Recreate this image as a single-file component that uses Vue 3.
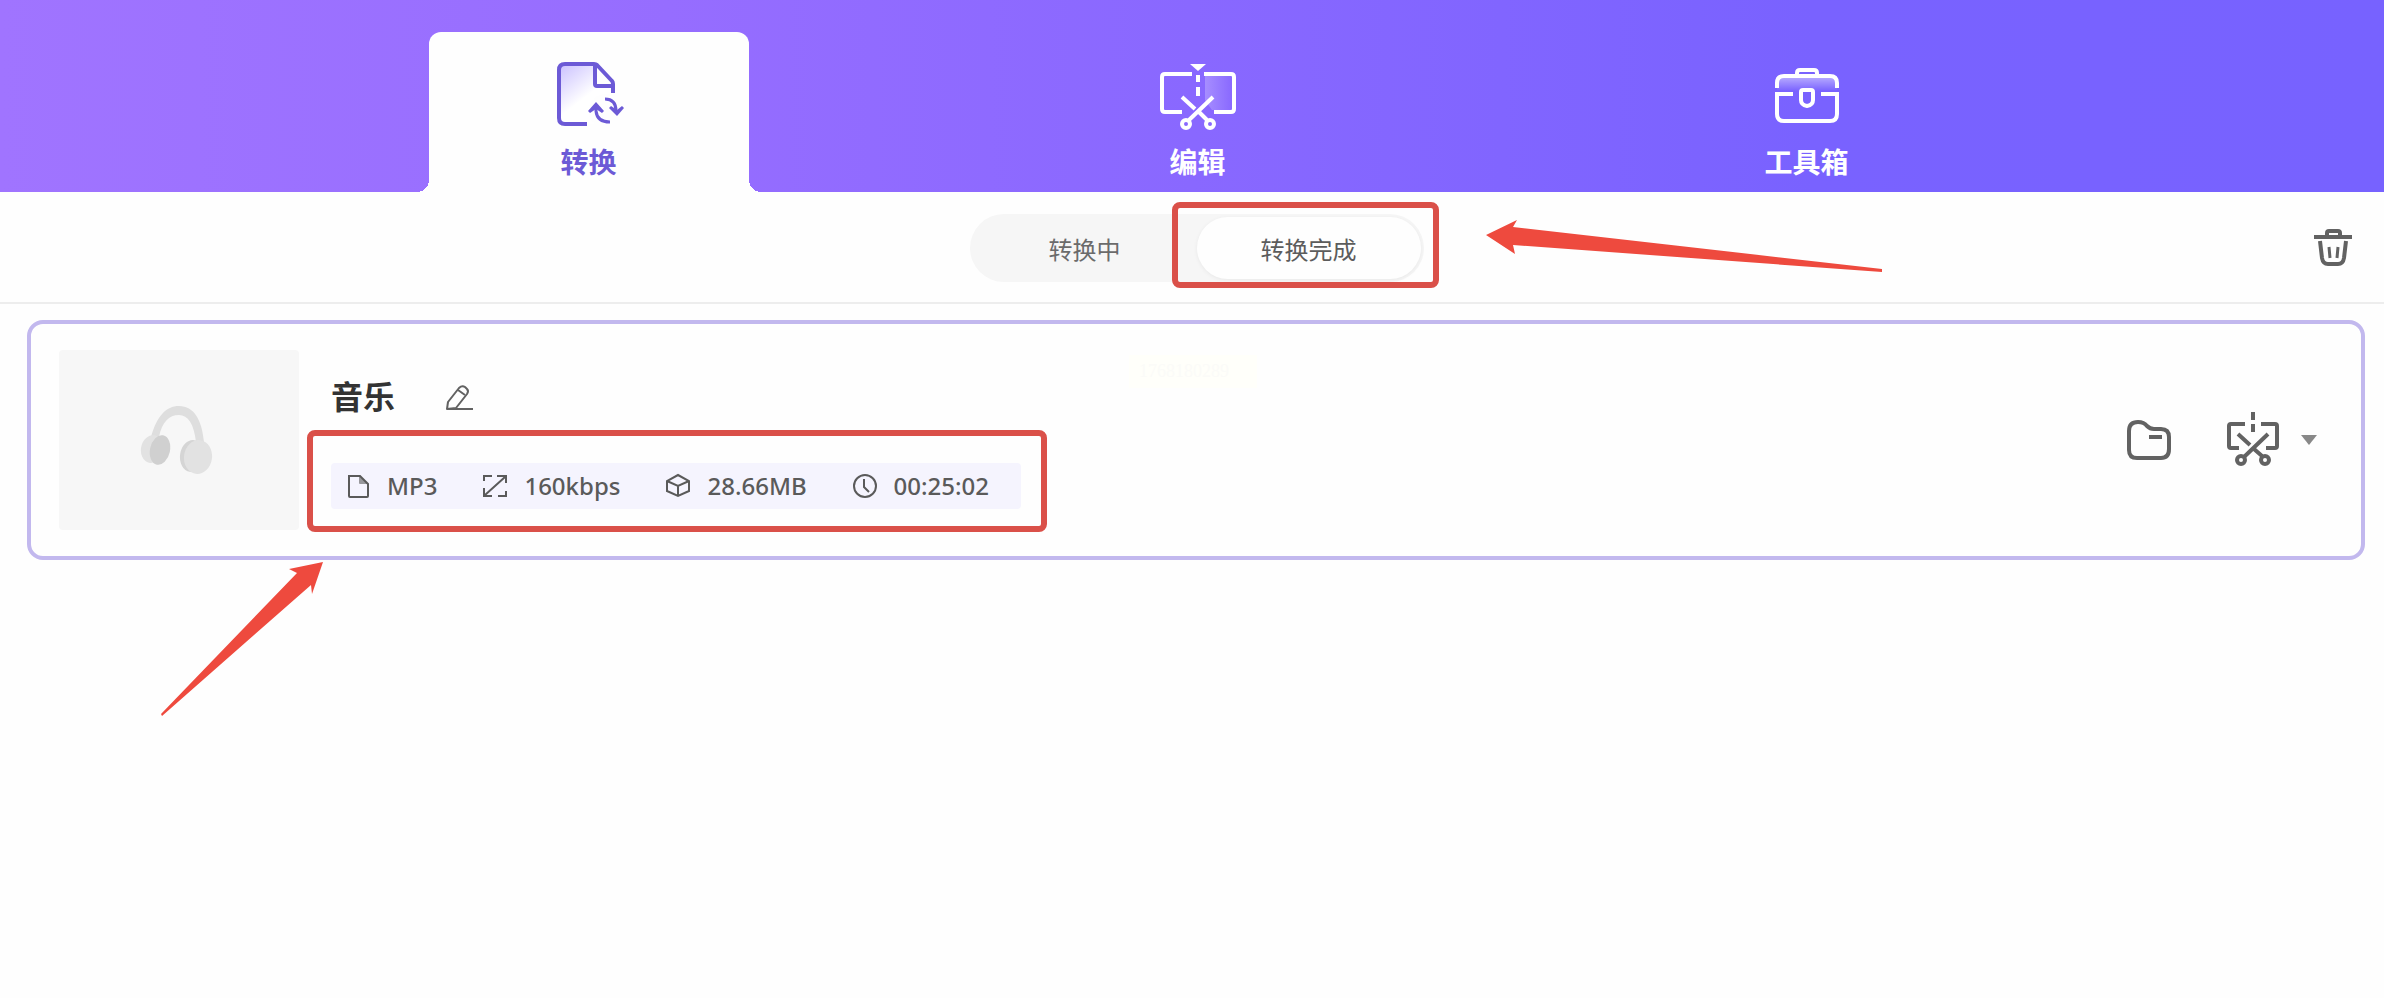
<script setup>
import { ref } from "vue";

const tabs = [
  { id: "convert", label: "转换" },
  { id: "edit", label: "编辑" },
  { id: "toolbox", label: "工具箱" },
];
const activeTab = ref("convert");

const states = [
  { id: "running", label: "转换中" },
  { id: "done", label: "转换完成" },
];
const activeState = ref("done");

const file = {
  name: "音乐",
  meta: [
    { id: "format", value: "MP3" },
    { id: "bitrate", value: "160kbps" },
    { id: "size", value: "28.66MB" },
    { id: "duration", value: "00:25:02" },
  ],
};
</script>

<template>
  <div class="app">
    <nav class="tab-bar">
      <button
        v-for="tab in tabs"
        :key="tab.id"
        type="button"
        class="tab"
        :class="{ 'tab--active': tab.id === activeTab }"
        @click="activeTab = tab.id"
      >
        <svg v-if="tab.id === 'convert'" class="tab-icon" viewBox="0 0 80 80" aria-hidden="true">
          <defs>
            <linearGradient id="doc-fill" x1="0" y1="0" x2="0.7" y2="1">
              <stop offset="0" stop-color="#c9bfff" />
              <stop offset="0.6" stop-color="#ffffff" />
            </linearGradient>
          </defs>
          <path d="M16 8h30v22h18v38H16q-6 0-6-6V14q0-6 6-6z" fill="url(#doc-fill)" />
          <circle cx="57" cy="55" r="17" fill="#fefefe" />
          <g fill="none" stroke="currentColor" stroke-width="4" stroke-linejoin="round">
            <path d="M38 68H16q-6 0-6-6V14q0-6 6-6h29q2 0 3 1l15 16q1 1 1 3v9" />
            <path d="M46 9v19q0 2 2 2h16" />
          </g>
          <g fill="none" stroke="currentColor" stroke-width="3">
            <path d="M47 50v5q1 11 14 11" />
            <path d="M56 43q11 0 11 12v2" />
          </g>
          <path d="M47 46l8 9-2 2-6-4-6 4-2-2zM68 60l-8-8 2-2 6 4 5-4 2 2z" fill="currentColor" />
        </svg>
        <svg v-else-if="tab.id === 'edit'" class="tab-icon" viewBox="0 0 80 80" aria-hidden="true">
          <defs>
            <linearGradient id="edit-fill">
              <stop offset="0" stop-color="#fff" stop-opacity="0.25" />
              <stop offset="1" stop-color="#fff" stop-opacity="0" />
            </linearGradient>
          </defs>
          <path d="M47 20h28v34H54l-7-10z" fill="url(#edit-fill)" />
          <path d="M32 8h16l-8 7z" fill="currentColor" />
          <g fill="none" stroke="currentColor" stroke-width="4">
            <path d="M34 18H7q-3 0-3 3v32q0 3 3 3h17M46 18h27q3 0 3 3v32q0 3-3 3H56" />
            <path d="M40 19v7M40 31v9" />
            <path d="M24 41l13 12M41 56l8 8M55 41L31 64" />
            <circle cx="28" cy="68" r="4" />
            <circle cx="52" cy="68" r="4" />
          </g>
        </svg>
        <svg v-else class="tab-icon" viewBox="0 0 80 80" aria-hidden="true">
          <defs>
            <linearGradient id="box-fill" x1="0" y1="0" x2="0" y2="1">
              <stop offset="0" stop-color="#fff" stop-opacity="0.5" />
              <stop offset="1" stop-color="#fff" stop-opacity="0" />
            </linearGradient>
          </defs>
          <path d="M10 26q0-6 6-6h48q6 0 6 6v9H10z" fill="url(#box-fill)" />
          <g fill="none" stroke="currentColor" stroke-width="4">
            <path d="M10 32v-5q0-7 7-7h46q7 0 7 7v5" />
            <path d="M30 20v-3q0-3 3-3h14q3 0 3 3v3" />
            <path d="M26 38H10v20q0 7 7 7h46q7 0 7-7V38H54" />
            <path d="M36 34h8q2 0 2 2v8q0 5-6 6-6-1-6-6v-8q0-2 2-2z" />
          </g>
        </svg>
        <span class="tab-label">{{ tab.label }}</span>
      </button>
    </nav>

    <div class="toolbar">
      <div class="segment">
        <button
          v-for="state in states"
          :key="state.id"
          type="button"
          class="segment-item"
          :class="{ 'segment-item--active': state.id === activeState }"
          @click="activeState = state.id"
        >
          {{ state.label }}
        </button>
        <span class="mark mark--segment"></span>
        <svg class="arrow arrow--segment" viewBox="0 0 398 54" aria-hidden="true">
          <path d="M0 16L31 1l-4 7 369 42v3L27 26l2 9z" fill="#ee4a3e" />
        </svg>
      </div>
      <button type="button" class="icon-button toolbar-delete" aria-label="删除">
        <svg width="48" height="48" viewBox="0 0 48 48" fill="none" stroke="currentColor" stroke-width="4" aria-hidden="true">
          <path d="M5 13h38" />
          <path d="M18 12V9q0-2 2-2h9q2 0 2 2v3" />
          <path d="M11 17l2 17q1 6 6 6h10q5 0 6-6l2-17" />
          <path d="M20 23l1 11M29 23l-1 11" stroke-width="3" />
        </svg>
      </button>
    </div>

    <main class="file-list">
      <article class="file-card">
        <div class="thumb">
          <svg width="80" height="80" viewBox="0 0 80 80" aria-hidden="true">
            <path d="M12 37C18 16 27 6 40 6c15 0 23 14 25 36h-8c-2-18-8-27-17-27-10 0-17 7-20 22z" fill="#dedede" />
            <ellipse cx="13" cy="49" rx="11" ry="14" transform="rotate(12 13 49)" fill="#e2e2e2" />
            <ellipse cx="21" cy="50" rx="10" ry="15" transform="rotate(12 21 50)" fill="#d0d0d0" />
            <ellipse cx="53" cy="56" rx="12" ry="16" transform="rotate(8 53 56)" fill="#d5d5d5" />
            <ellipse cx="59" cy="57" rx="14" ry="17" transform="rotate(8 59 57)" fill="#e2e2e2" />
          </svg>
        </div>

        <div class="file-info">
          <div class="file-title-row">
            <h2 class="file-title">{{ file.name }}</h2>
            <button type="button" class="icon-button" aria-label="重命名">
              <svg width="30" height="30" viewBox="0 0 30 30" fill="none" stroke="currentColor" stroke-width="2" stroke-linejoin="round" aria-hidden="true">
                <path d="M2 27l1-7L14 6q3-3 6-1l2 2q2 2 0 5L11 26z" />
                <path d="M13 8l7 5M2 27h26" />
              </svg>
            </button>
          </div>

          <ul class="file-meta">
            <li v-for="item in file.meta" :key="item.id" class="meta-item">
              <svg class="meta-icon" viewBox="0 0 26 26" aria-hidden="true">
                <template v-if="item.id === 'format'">
                  <path d="M4 3h11l8 8v12q0 1-1 1H5q-1 0-1-1z" />
                  <path d="M14 3v7q0 1 1 1h8z" fill="currentColor" fill-opacity="0.6" stroke="none" />
                </template>
                <template v-else-if="item.id === 'bitrate'">
                  <path d="M2 8V3h8M24 18v5h-8M3 22L23 4M15 3h9v7M2 15v8h8" />
                </template>
                <template v-else-if="item.id === 'size'">
                  <path d="M13 2l11 6v10l-11 5-11-5V8zM2 8l11 5 11-5M13 13v10" />
                </template>
                <template v-else>
                  <circle cx="13" cy="13" r="11" />
                  <path d="M12 6v8l5 5" />
                </template>
              </svg>
              {{ item.value }}
            </li>
            <li class="mark mark--meta" aria-hidden="true"></li>
          </ul>
        </div>

        <div class="file-actions">
          <button type="button" class="icon-button" aria-label="打开文件夹">
            <svg width="48" height="48" viewBox="0 0 48 48" fill="none" stroke="currentColor" stroke-width="4" aria-hidden="true">
              <path d="M4 15q0-9 9-9 6 0 9 4 3 3 7 3h7q8 0 8 8v12q0 9-8 9H12q-8 0-8-8z" />
              <path d="M24 21h13" />
            </svg>
          </button>
          <button type="button" class="icon-button" aria-label="剪辑">
            <svg width="56" height="60" viewBox="0 0 56 60" fill="none" stroke="currentColor" stroke-width="4" aria-hidden="true">
              <path d="M20 14H6q-2 0-2 2v20q0 2 2 2h8M36 14h14q2 0 2 2v20q0 2-2 2h-9" />
              <path d="M28 2v8M28 14v8" />
              <path d="M13 24l12 11M29 39l8 7M43 24L19 47" />
              <circle cx="16" cy="50" r="4" />
              <circle cx="40" cy="50" r="4" />
            </svg>
          </button>
          <button type="button" class="icon-button icon-button--more" aria-label="更多">
            <svg width="16" height="10" viewBox="0 0 16 10" aria-hidden="true">
              <path d="M0 0h16L8 10z" fill="#888" />
            </svg>
          </button>
        </div>

        <span class="task-stamp">1768180289</span>
        <svg class="arrow arrow--meta" viewBox="0 0 162 154" aria-hidden="true">
          <path d="M162 0L128 7l8 4L0 152l1 2L150 23l1 9z" fill="#ee4a3e" />
        </svg>
      </article>
    </main>
  </div>
</template>

<style>
body {
  background: #fff;
}
</style>

<style scoped>
.app {
  min-height: 100vh;
  background: #fefefe;
  color: #5c5c5c;
  font-family: "Noto Sans", "Noto Sans CJK SC", sans-serif;
  overflow: hidden;
}
button { border: none; background: none; padding: 0; font-family: inherit; color: inherit; cursor: pointer; }
svg { display: block; }

/* Top tabs */
.tab-bar {
  display: flex;
  justify-content: center;
  gap: 289px;
  padding: 32px 0 0 11px;
  background: linear-gradient(90deg, #a074ff 0%, #966dff 28%, #8968ff 50%, #7962ff 76%, #7762ff 100%);
}
.tab {
  position: relative;
  display: flex;
  flex-direction: column;
  align-items: center;
  width: 320px;
  height: 160px;
  padding-top: 24px;
  border-radius: 12px 12px 0 0;
  color: #fff;
}
.tab--active { background: #fefefe; color: #6c5ad6; }
.tab--active::before,
.tab--active::after {
  content: "";
  position: absolute;
  bottom: 0;
  width: 12px;
  height: 12px;
}
.tab--active::before { right: 100%; background: radial-gradient(circle at 0 0, transparent 12px, #fefefe 12px); }
.tab--active::after { left: 100%; background: radial-gradient(circle at 100% 0, transparent 12px, #fefefe 12px); }
.tab-icon { width: 80px; height: 80px; }
.tab-label { margin-top: 10px; font-size: 28px; font-weight: 700; line-height: 32px; }

/* Status switch */
.toolbar {
  display: grid;
  grid-template-columns: 1fr auto 1fr;
  align-items: center;
  height: 108px;
  padding: 2px 27px 0 36px;
  border-bottom: 2px solid #ededed;
}
.segment {
  position: relative;
  grid-column: 2;
  display: flex;
  padding: 3px;
  border-radius: 34px;
  background: #f6f6f6;
}
.segment-item { width: 224px; height: 62px; border-radius: 31px; font-size: 24px; color: #6b6b6b; }
.segment-item--active { background: #fefefe; color: #5c5c5c; box-shadow: 0 1px 4px rgba(0, 0, 0, 0.06); }
.toolbar-delete { justify-self: end; }
.icon-button { display: flex; align-items: center; color: #626262; }

/* Highlights */
.mark { position: absolute; border: 6px solid #da5049; border-radius: 8px; pointer-events: none; }
.mark--segment { inset: -12px -15px -6px 202px; }
.mark--meta { inset: -33px -26px -23px -24px; }
.arrow { position: absolute; pointer-events: none; }
.arrow--segment { left: 100%; top: 5px; width: 398px; height: 54px; margin-left: 62px; }
.arrow--meta { left: 130px; top: 238px; width: 162px; height: 154px; }

/* Converted file */
.file-list { padding: 16px 19px 0 27px; }
.file-card {
  position: relative;
  display: flex;
  align-items: center;
  padding: 26px 44px 26px 28px;
  border: 4px solid #c2b8ee;
  border-radius: 16px;
}
.thumb {
  display: flex;
  align-items: center;
  justify-content: center;
  width: 240px;
  height: 180px;
  border-radius: 4px;
  background: #f7f7f7;
}
.file-info { display: flex; flex-direction: column; gap: 42px; margin-left: 32px; padding-top: 2px; }
.file-title-row { display: flex; align-items: center; gap: 50px; }
.file-title { margin: 0; font-size: 32px; font-weight: 700; line-height: 48px; color: #333; }
.file-meta {
  position: relative;
  display: flex;
  gap: 45px;
  margin: 0;
  padding: 0 32px 0 14px;
  border-radius: 4px;
  background: #f5f4fe;
  list-style: none;
}
.meta-item { display: flex; align-items: center; gap: 16px; font-size: 24px; font-weight: 500; line-height: 46px; color: #5a5a5a; }
.meta-icon { width: 26px; height: 26px; fill: none; stroke: currentColor; stroke-width: 2; }
.file-actions { display: flex; align-items: center; margin-left: auto; gap: 52px; }
.icon-button--more { margin-left: -32px; }
.task-stamp {
  position: absolute;
  left: 1098px;
  top: 31px;
  width: 118px;
  padding-left: 10px;
  background: #fffffa;
  color: #fbfbf8;
  font-family: "Liberation Serif", serif;
  font-size: 18px;
  line-height: 33px;
}
</style>
